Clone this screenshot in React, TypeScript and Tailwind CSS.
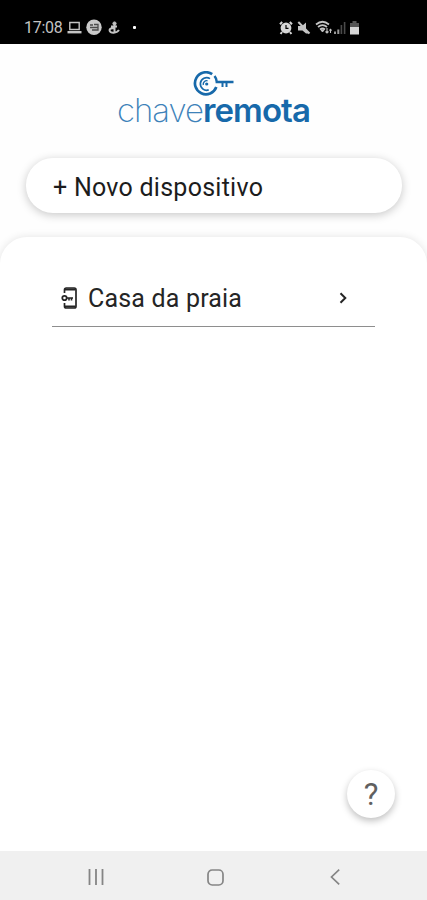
function StatusBar() {
  return (
    <header className="flex h-11 items-center bg-black pt-[11px] pl-6 text-[#c4c4c4]">
      <span className="w-[39px] font-['Roboto'] text-[16px] leading-4 tracking-[-0.3px] whitespace-nowrap">17:08</span>
      {/* Notifications */}
      <svg className="ml-[3px]" width="18" height="14" viewBox="0 0 18 14" fill="none" stroke="currentColor">
        <path d="M3.8 1.5h9.4v7H3.8z" strokeWidth="1.4" />
        <path d="M1.5 11.2h14" strokeWidth="2.4" />
      </svg>
      <svg className="ml-[1px]" width="18" height="18" viewBox="0 0 18 18">
        <circle cx="9" cy="8.3" r="7.7" fill="#c9c9c9" />
        <path d="M5 6h3M5 8.5h4M9 5.5h4V11H7M9 8.5h4" fill="none" stroke="#4b4b4b" strokeWidth="1.3" />
      </svg>
      <svg className="ml-[5px]" width="14" height="14" viewBox="0 0 14 14" fill="none" stroke="currentColor">
        <circle cx="6.5" cy="2.5" r="1.6" fill="currentColor" />
        <path d="M3 5.5h6M6.5 4v7M1.5 9.5c0-2 2-2.5 4-2.5M1.500 9.5c1 3 7 3 9.5-.5" strokeWidth="2" />
      </svg>
      <span className="ml-[11px] h-[3px] w-[3px] rounded-[1px] bg-white" />
      {/* System */}
      <svg className="ml-[143px]" width="14" height="14" viewBox="0 0 14 14" fill="none">
        <circle cx="7" cy="7" r="5.4" fill="#d6d6d6" />
        <path d="M7 4v3.3h2.5" stroke="#000" strokeWidth="1.2" />
        <path d="M1 3.2 3.2 1M13 3.2 10.8 1M3 11l-1.4 2M11 11l1.4 2" stroke="#d6d6d6" strokeWidth="2" />
      </svg>
      <svg className="ml-[4px]" width="14" height="14" viewBox="0 0 14 14">
        <path d="M1 5h4l4-3.5V8l2.500 4.5L9 12.500 5.500 9.500H1z" fill="currentColor" />
        <path d="m1.300 1 11.200 11.500" stroke="currentColor" strokeWidth="2" />
      </svg>
      <svg className="ml-[4px]" width="18" height="15" viewBox="0 0 18 15" fill="none" stroke="currentColor" strokeWidth="1.7">
        <path d="M1 4.5Q7.5-1 14 4.500M3 7Q7.5 3.200 12 7M5 9.500Q7.5 7.500 10 9.500" />
        <path d="m6 10 1.5 2L9 10z" fill="currentColor" strokeWidth="1" />
        <path d="M12 8v5M10.5 11.5 12 13l1.5-1.500M15.500 13V9.500M14.300 10.500l1.200-1.300 1.200 1.300" strokeWidth="1.1" />
      </svg>
      <svg width="14" height="14" viewBox="0 0 14 14">
        <path d="M1 10.5h2V13H1zM4.300 8.500h2V13h-2z" fill="#999" />
        <path d="M7.6 4h1.600v9H7.600zM10.800 1h1.600v12h-1.600z" fill="#4a4a4a" />
      </svg>
      <svg className="ml-[2px]" width="11" height="14" viewBox="0 0 11 14">
        <path d="M3.5 0h4v2H10v5H1V2h2.5z" fill="#555" />
        <path d="M1 6h9v7.500H1z" fill="#d6d6d6" />
      </svg>
    </header>
  );
}

function Logo() {
  return (
    <div className="flex flex-col items-center text-[#1769aa]">
      <svg className="ml-[1px]" width="42" height="26" viewBox="0 0 42 26" fill="none" stroke="currentColor">
        <path d="M19.2 3.2A11 11 0 1 0 23.300 16" strokeWidth="2.7" />
        <path d="M21.5 5Q23.600 7.500 23.800 11H40.500" strokeWidth="2.5" />
        <path d="M17 7.6A6.300 6.300 0 1 0 15.700 18.900" strokeWidth="1.7" />
        <path d="M14.5 9.700A3.600 3.600 0 0 0 10.300 14" strokeWidth="1.4" />
        <circle cx="13.7" cy="13" r="1.6" fill="currentColor" stroke="none" />
        <path d="M29.5 11v5M33.500 11v5" strokeWidth="2" />
      </svg>
      <h1 className="-mt-[5px] flex font-['Inter'] text-[33px] leading-9">
        <span className="font-extralight tracking-[-1px] text-[#3d82b9]">chave</span>
        <span className="font-semibold tracking-[-0.9px]">remota</span>
      </h1>
    </div>
  );
}

function NavigationBar() {
  return (
    <nav className="flex h-[49px] items-center bg-[#f0f0f0] pt-[3px] text-[#858585]">
      <button className="ml-[87px]" aria-label="Recentes">
        <svg width="18" height="18" viewBox="0 0 18 18" stroke="currentColor" strokeWidth="1.8">
          <path d="M2.5 1v16M9 1v16M15.5 1v16" />
        </svg>
      </button>
      <button className="ml-[101px]" aria-label="Início">
        <svg width="19" height="19" viewBox="0 0 19 19" fill="none" stroke="currentColor" strokeWidth="1.7">
          <rect x="2" y="2" width="15" height="15" rx="4.2" />
        </svg>
      </button>
      <button className="ml-[104px]" aria-label="Voltar">
        <svg width="12" height="18" viewBox="0 0 12 18" fill="none" stroke="currentColor" strokeWidth="1.7">
          <path d="M10.2 1.7 2.5 9l7.7 7.3" />
        </svg>
      </button>
    </nav>
  );
}

export default function App() {
  return (
    <div className="flex h-[900px] w-[427px] flex-col overflow-hidden bg-[#fefefe] font-['Roboto',sans-serif]">
      <StatusBar />

      <div className="shrink-0 pt-[27px]">
        <Logo />
      </div>

      <button className="mr-[25px] ml-[26px] mt-[30px] flex h-[55px] shrink-0 items-center rounded-[27px] bg-white pt-[5px] pl-[27px] text-left text-[25px] text-[#1c1c1c] shadow-[0_2px_10px_rgba(0,0,0,0.22)]">
        <span className="tracking-[0.26px] whitespace-nowrap">+ Novo dispositivo</span>
      </button>

      <main className="mt-6 flex flex-1 flex-col rounded-t-[27px] bg-white px-[52px] shadow-[0_0_9px_rgba(0,0,0,0.11)]">
        <button className="mt-[33px] flex h-[57px] items-center border-b border-[#8e8e8e] pt-[2px] pl-[8px] text-left text-[#252525]">
          <svg className="-mt-[3px]" width="20" height="24" viewBox="0 0 20 24" fill="none" stroke="currentColor">
            <path d="M4.5 7V3.800Q4.500 2 6.300 2h8Q16 2 16 3.800v16.400Q16 22 14.300 22h-8Q4.500 22 4.500 20.200V17" strokeWidth="1.7" />
            <path d="M5 3.5h10.500M5 20.500h10.500" strokeWidth="1.8" />
            <circle cx="4.5" cy="12" r="2.2" strokeWidth="1.8" />
            <path d="M6.5 12H13M9 12v2.500M11.500 12v2.500" strokeWidth="1.6" />
          </svg>
          <span className="ml-[8px] flex-1 text-[25px] tracking-[0.18px]">Casa da praia</span>
          <svg className="-mt-[3px] mr-[26px]" width="12" height="14" viewBox="0 0 12 14" fill="none" stroke="currentColor" strokeWidth="2">
            <path d="m3.5 2.2 4.800 4.800-4.800 4.800" />
          </svg>
        </button>

        <button className="mt-auto -mr-[20px] mb-[33px] flex h-12 w-12 items-center justify-center self-end rounded-full bg-white pt-[2px] text-[31px] text-[#606060] shadow-[0_3px_7px_rgba(0,0,0,0.25)]">
          ?
        </button>
      </main>

      <NavigationBar />
    </div>
  );
}
